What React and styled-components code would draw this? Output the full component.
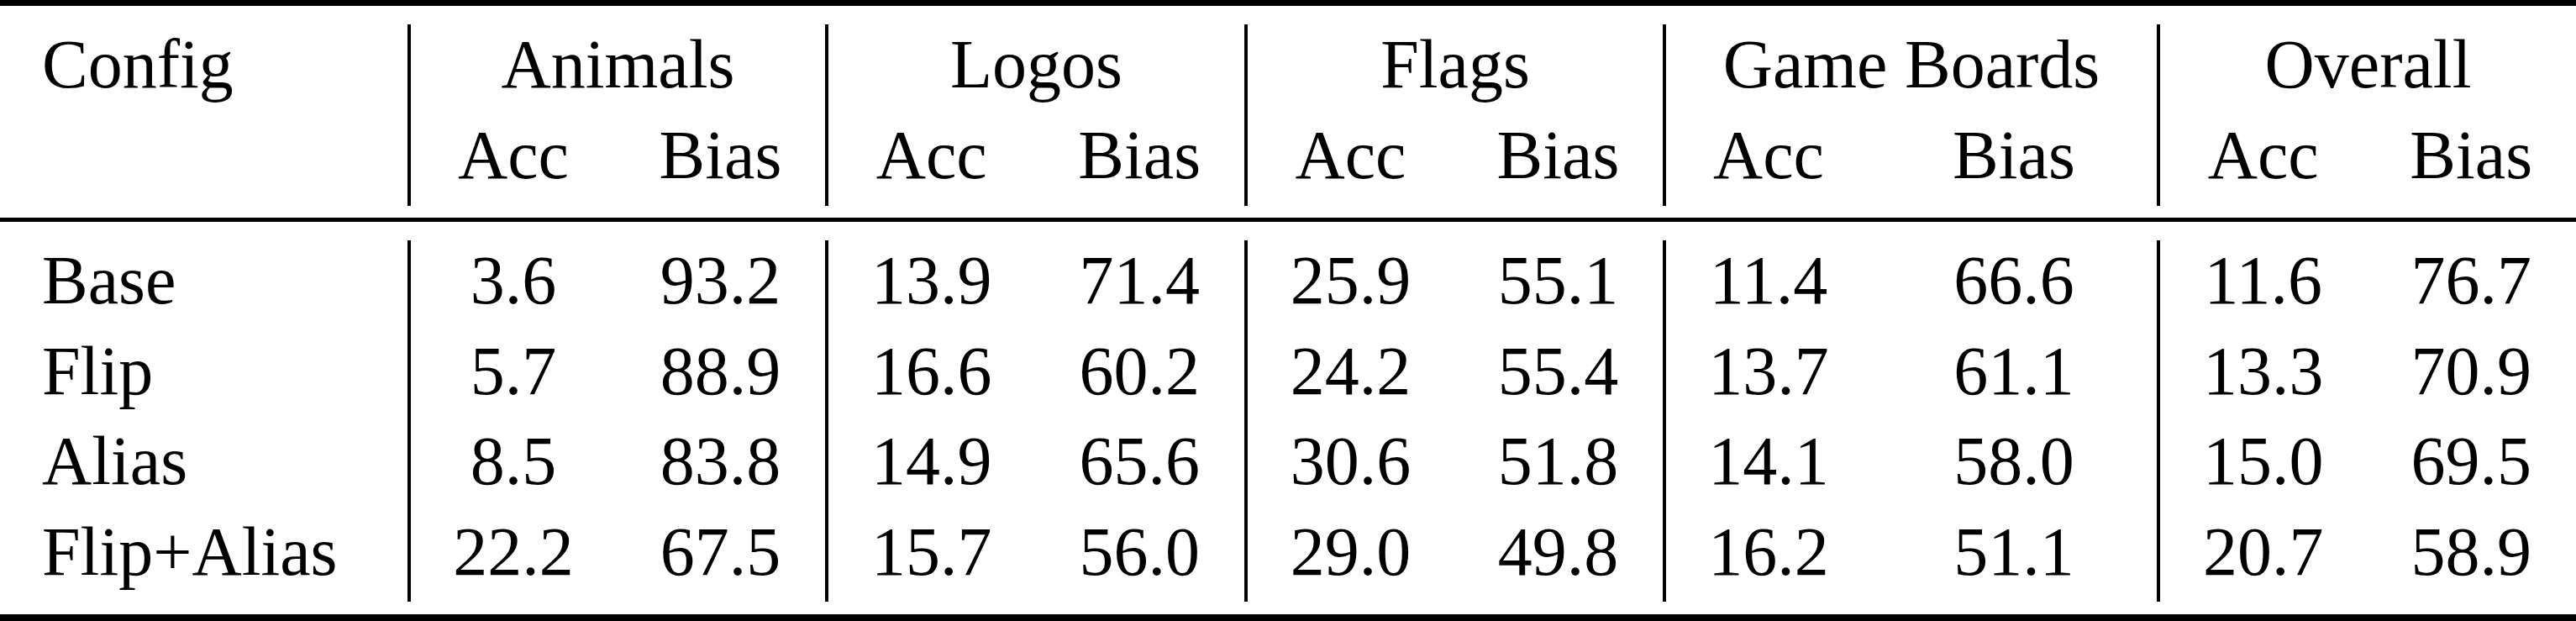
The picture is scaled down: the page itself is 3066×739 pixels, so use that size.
import React from "react";
import styled, { createGlobalStyle } from "styled-components";

const GlobalStyle = createGlobalStyle`
  html, body {
    margin: 0;
    padding: 0;
    background: #ffffff;
  }
  body {
    font-family: "Liberation Serif", serif;
    color: #000000;
  }
`;

const COLUMNS =
  "485px 248px 249px 249.5px 249.5px 249px 249px 248px 340px 249.5px 249.5px";

const Table = styled.div`
  width: 3066px;
  height: 739px;
  display: flex;
  flex-direction: column;
  background: #ffffff;
  font-family: "Liberation Serif", serif;
`;

const Rule = styled.div`
  height: ${(p) => p.$thickness}px;
  margin-top: ${(p) => p.$gap || 0}px;
  background: #000000;
  flex: none;
`;

const Grid = styled.div`
  display: grid;
  grid-template-columns: ${COLUMNS};
  grid-auto-rows: ${(p) => p.$rowHeight}px;
  margin-top: ${(p) => p.$gap}px;
  flex: none;
`;

const Cell = styled.div`
  box-sizing: border-box;
  grid-column: ${(p) => (p.$span ? `span ${p.$span}` : "auto")};
  border-left: ${(p) => (p.$divider ? "4px solid #000000" : "none")};
  display: flex;
  justify-content: ${(p) => (p.$align === "left" ? "flex-start" : "center")};
  align-items: flex-start;
  padding-top: 7px;
  padding-left: ${(p) => (p.$align === "left" ? "50px" : "0")};
  font-family: "Liberation Serif", serif;
  font-size: 82px;
  line-height: 1;
  white-space: nowrap;
`;

const groups = ["Animals", "Logos", "Flags", "Game Boards", "Overall"];

const rows = [
  { name: "Base", values: ["3.6", "93.2", "13.9", "71.4", "25.9", "55.1", "11.4", "66.6", "11.6", "76.7"] },
  { name: "Flip", values: ["5.7", "88.9", "16.6", "60.2", "24.2", "55.4", "13.7", "61.1", "13.3", "70.9"] },
  { name: "Alias", values: ["8.5", "83.8", "14.9", "65.6", "30.6", "51.8", "14.1", "58.0", "15.0", "69.5"] },
  { name: "Flip+Alias", values: ["22.2", "67.5", "15.7", "56.0", "29.0", "49.8", "16.2", "51.1", "20.7", "58.9"] },
];

export default function App() {
  return (
    <>
      <GlobalStyle />
      <Table>
        <Rule $thickness={7} />
        <Grid $rowHeight={108} $gap={22}>
          <Cell $align="left">Config</Cell>
          {groups.map((g) => (
            <Cell key={g} $span={2} $divider>
              {g}
            </Cell>
          ))}
          <Cell $align="left" />
          {groups.map((g) => (
            <React.Fragment key={g}>
              <Cell $divider>Acc</Cell>
              <Cell>Bias</Cell>
            </React.Fragment>
          ))}
        </Grid>
        <Rule $thickness={5} $gap={14} />
        <Grid $rowHeight={107.5} $gap={22}>
          {rows.map((r) => (
            <React.Fragment key={r.name}>
              <Cell $align="left">{r.name}</Cell>
              {r.values.map((v, i) => (
                <Cell key={i} $divider={i % 2 === 0}>
                  {v}
                </Cell>
              ))}
            </React.Fragment>
          ))}
        </Grid>
        <Rule $thickness={8} $gap={15} />
      </Table>
    </>
  );
}
